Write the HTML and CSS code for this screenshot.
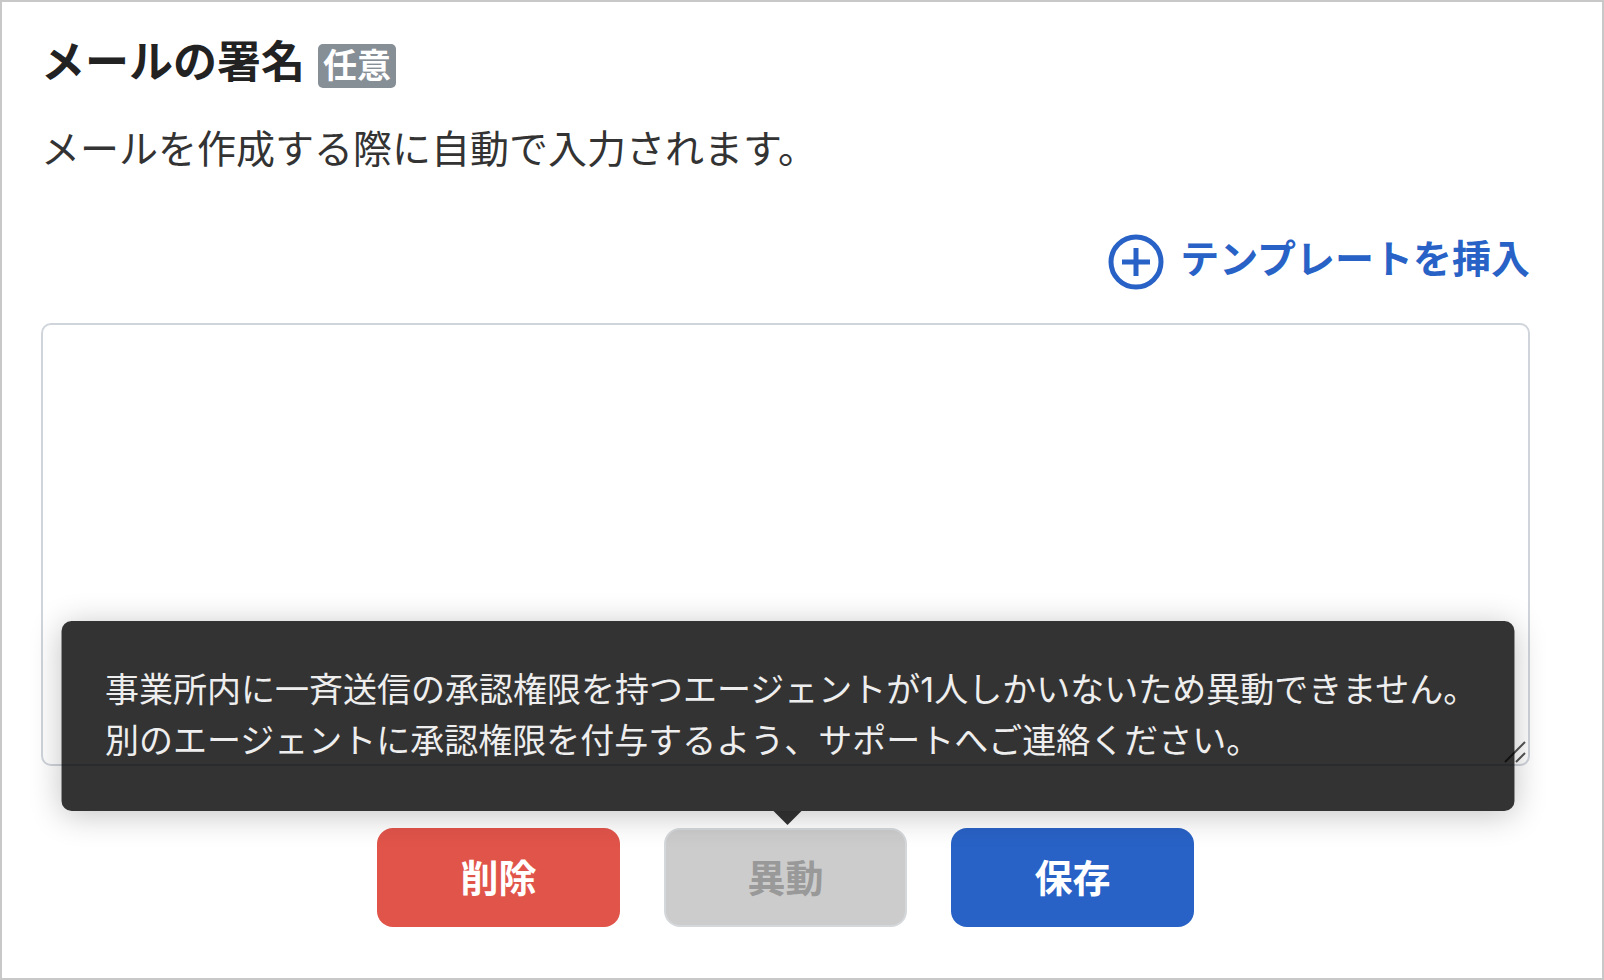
FILE: index.html
```
<!DOCTYPE html>
<html lang="ja">
<head>
<meta charset="utf-8">
<title>メールの署名</title>
<link rel="stylesheet" href="styles.css">
</head>
<body>
<form class="panel">
  <div class="heading">
    <label class="title" for="signature">メールの署名</label>
    <span class="badge">任意</span>
  </div>
  <p class="description" id="signature-help">メールを作成する際に自動で入力されます。</p>
  <div class="tools">
    <button class="insert" type="button">
      <svg class="insert-icon" viewBox="0 0 56 56" aria-hidden="true">
        <circle cx="28" cy="28" r="25"/>
        <path d="M28 14v28M14 28h28"/>
      </svg>
      テンプレートを挿入
    </button>
  </div>
  <div class="field">
    <textarea class="signature" id="signature" aria-describedby="signature-help"></textarea>
    <svg class="grip" viewBox="0 0 22 22" aria-hidden="true"><path d="M1 21L21 1M12 21l9-9"/></svg>
  </div>
  <div class="actions">
    <button class="button button-delete" type="button">削除</button>
    <div class="tooltip-anchor">
      <button class="button button-move" type="button" disabled aria-describedby="move-tip">異動</button>
      <div class="tooltip" id="move-tip" role="tooltip">事業所内に一斉送信の承認権限を持つエージェントが1人しかいないため異動できません。<br>別のエージェントに承認権限を付与するよう、サポートへご連絡ください。</div>
    </div>
    <button class="button button-save" type="submit">保存</button>
  </div>
</form>
</body>
</html>
```
FILE: styles.css
```
* {
  box-sizing: border-box;
}

body {
  margin: 0;
  background: #fff;
  color: #333;
  font-family: "Noto Sans CJK JP", sans-serif;
}

button,
textarea {
  font: inherit;
}

.panel {
  min-height: 100vh;
  padding: 27px 72px 48px 39px;
  border: 2px solid #c8c8c8;
}

.heading {
  display: flex;
  align-items: center;
  gap: 13px;
}

.title {
  color: #222;
  font-size: 44px;
  font-weight: 700;
  line-height: 60px;
}

.badge {
  margin-top: 14px;
  padding: 0 5px 4px;
  border-radius: 5px;
  background: #868e96;
  color: #fff;
  font-size: 34px;
  font-weight: 700;
  line-height: 40px;
}

.description {
  margin: 28px 0 0;
  font-size: 39px;
  line-height: 58px;
}

.tools {
  display: flex;
  justify-content: flex-end;
  margin-top: 59px;
}

.insert {
  display: flex;
  align-items: flex-start;
  gap: 16px;
  padding: 0;
  border: 0;
  background: none;
  color: #2962c6;
  font-size: 39px;
  font-weight: 700;
  line-height: 44px;
  cursor: pointer;
}

.insert-icon {
  width: 56px;
  height: 56px;
  fill: none;
  stroke: currentColor;
  stroke-width: 5;
}

.field {
  position: relative;
  margin-top: 33px;
}

.signature {
  display: block;
  width: 100%;
  height: 443px;
  padding: 16px;
  border: 2px solid #d0d5dc;
  border-radius: 10px;
  background: #fff;
  color: inherit;
  font-size: 39px;
  resize: none;
}

.grip {
  position: absolute;
  right: 4px;
  bottom: 3px;
  width: 22px;
  height: 22px;
  fill: none;
  stroke: #555;
  stroke-width: 2;
}

.actions {
  display: flex;
  justify-content: center;
  gap: 44px;
  margin-top: 62px;
}

.button {
  display: block;
  width: 243px;
  height: 99px;
  padding: 0 0 3px;
  border: 0;
  border-radius: 16px;
  color: #fff;
  font-size: 38px;
  font-weight: 700;
  line-height: 56px;
  cursor: pointer;
}

.button-delete {
  background: #e1544a;
}

.button-save {
  background: #2962c6;
}

.button-move {
  border: 2px solid #d5d8db;
  background: #ccc;
  color: #999;
  cursor: default;
}

.tooltip-anchor {
  position: relative;
}

.tooltip {
  position: absolute;
  bottom: calc(100% + 17px);
  left: calc(50% + 2px);
  width: 1453px;
  padding: 43px 44px 45px;
  border-radius: 10px;
  background: rgba(0, 0, 0, 0.8);
  box-shadow: 0 4px 32px rgba(0, 0, 0, 0.24);
  color: #eee;
  font-family: Inter, "Noto Sans CJK JP", sans-serif;
  font-size: 34px;
  line-height: 51px;
  white-space: nowrap;
  transform: translateX(-50%);
}

.tooltip::after {
  content: "";
  position: absolute;
  top: 100%;
  left: 50%;
  border: 14px solid transparent;
  border-top-color: rgba(0, 0, 0, 0.8);
  border-bottom-width: 0;
  transform: translateX(-50%);
}
```
